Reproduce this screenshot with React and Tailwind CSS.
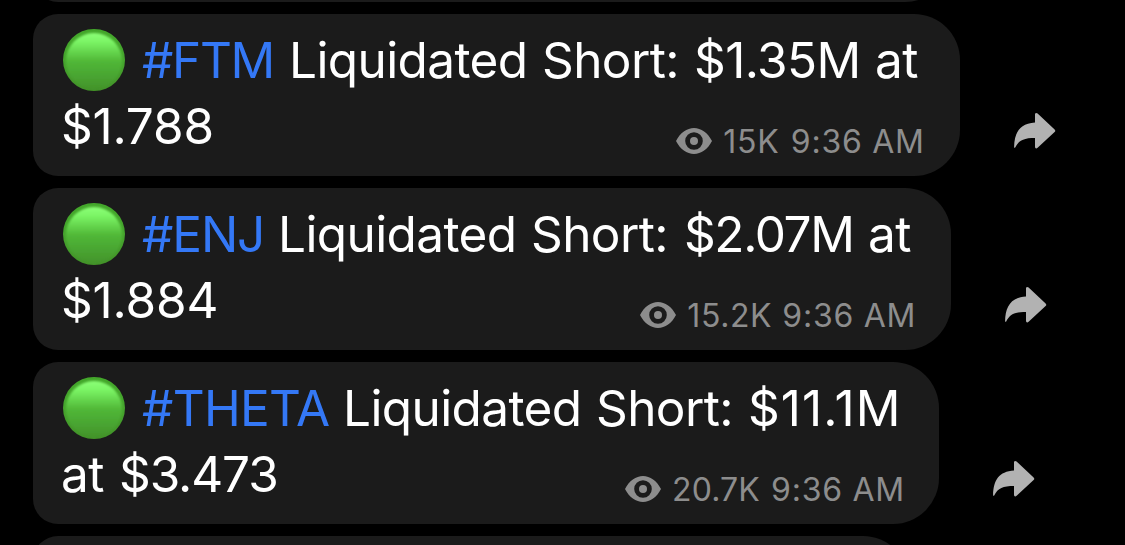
const messages = [
  {
    bubble: 'w-[927px]',
    tag: '#FTM', tagClass: 'w-[147px] tracking-[-1.3px]',
    words: [['Liquidated', 'w-[253px]'], ['Short:', 'w-[152px]'], ['$1.35M', 'w-[181px]'], ['at', 'w-[44px]']],
    second: [['$1.788', 'w-[160px] tracking-[-0.2px]']],
    views: '15K', viewsClass: 'w-[67.5px]', metaClass: 'pr-[35.25px]',
  },
  {
    bubble: 'w-[918px]',
    tag: '#ENJ', tagClass: 'w-[136px] tracking-[-1.1px]',
    words: [['Liquidated', 'w-[253px]'], ['Short:', 'w-[153px]'], ['$2.07M', 'w-[184px] tracking-[-1.4px]'], ['at', 'w-[44px]']],
    second: [['$1.884', 'w-[160px] tracking-[-0.15px]']],
    views: '15.2K', viewsClass: 'w-[95px] tracking-[0.6px]', metaClass: 'pr-[34.75px]',
  },
  {
    bubble: 'w-[906px]',
    tag: '#THETA', tagClass: 'w-[201px] tracking-[-0.7px]',
    words: [['Liquidated', 'w-[253px]'], ['Short:', 'w-[152px]'], ['$11.1M', 'w-[160px] tracking-[1.1px]']],
    second: [['at', 'w-[58px]'], ['$3.473', 'w-[160px] tracking-[-1.1px]']],
    views: '20.7K', viewsClass: 'w-[99px] tracking-[0.1px]', metaClass: 'pr-[34px]',
  },
];

function Eye() {
  return (
    <svg className="mt-[2px] mr-[11px] h-[26px] w-[36px] shrink-0" viewBox="0 0 36 26" fill="#8d8d8d">
      <path fillRule="evenodd" d="M0 13C4 5 11 0 18 0s14 5 18 13c-4 8-11 13-18 13S4 21 0 13ZM18 4.2a8.8 8.8 0 1 0 0 17.6 8.8 8.8 0 0 0 0-17.6Z" />
      <circle cx="18" cy="13" r="4" />
    </svg>
  );
}

function Forward() {
  return (
    <svg className="mb-[26px] ml-[53px] h-[38px] w-[44px]" viewBox="0 0 44 38" fill="#b2b2b2">
      <path d="M22 2.8c0-1.9 1.3-2.4 2.6-1.2l17 15.8c.9.8.9 1.8 0 2.6l-17 15.8c-1.3 1.2-2.6.7-2.6-1.2V26C11 26 6 28 2.2 35.5c-.4.7-1.1.5-1.1-.4C1.4 20.5 7 11.3 22 10.5Z" />
    </svg>
  );
}

function GreenCircle() {
  return (
    <svg className="mr-[17px] h-[62px] w-[62px] shrink-0" viewBox="0 0 62 62">
      <defs>
        <linearGradient id="body" x1="0" y1="0" x2="0" y2="1">
          <stop offset="0" stopColor="#43a72a" />
          <stop offset=".5" stopColor="#45a42d" />
          <stop offset="1" stopColor="#429129" />
        </linearGradient>
        <linearGradient id="gloss" x1="0" y1="0" x2="0" y2="1">
          <stop offset="0" stopColor="#8cff78" />
          <stop offset=".16" stopColor="#7bf465" />
          <stop offset=".5" stopColor="#51b838" />
          <stop offset="1" stopColor="#43942b" />
        </linearGradient>
        <filter id="soft" x="-10%" y="-10%" width="120%" height="120%">
          <feGaussianBlur stdDeviation="0.9" />
        </filter>
      </defs>
      <circle cx="31" cy="31" r="31" fill="url(#body)" />
      <ellipse cx="31" cy="32" rx="28" ry="28" fill="url(#gloss)" filter="url(#soft)" />
    </svg>
  );
}

function Words({ items }) {
  return items.map(([text, width]) => (
    <span key={text} className={`shrink-0 ${width}`}>{text}</span>
  ));
}

function Message({ message }) {
  return (
    <div className="flex h-[162px] items-end">
      <div className={`flex h-full shrink-0 flex-col rounded-l-[25px] rounded-r-[46px] bg-[#1b1b1b] pt-[15px] pl-[30px] ${message.bubble}`}>
        <div className="flex h-[66px] text-[49.5px] leading-[62px] tracking-[-0.6px] whitespace-nowrap text-white">
          <GreenCircle />
          <span className={`shrink-0 text-[#3478f6] ${message.tagClass}`}>{message.tag}</span>
          <Words items={message.words} />
        </div>
        <div className={`flex justify-between ${message.metaClass}`}>
          <div className="-ml-[2px] flex text-[49.5px] leading-[62px] tracking-[-0.6px] whitespace-nowrap text-white">
            <Words items={message.second} />
          </div>
          <div className="mt-[31px] flex text-[32px] leading-[32px] tracking-[0.75px] whitespace-nowrap text-[#8d8d8d]">
            <Eye />
            <span className={message.viewsClass}>{message.views}</span>
            <span>9:36 AM</span>
          </div>
        </div>
      </div>
      <Forward />
    </div>
  );
}

export default function App() {
  return (
    <main className="h-[545px] w-[1125px] overflow-hidden bg-black pl-[33px] font-['Inter',sans-serif]">
      <div className="flex h-[2px] w-[918px] flex-col justify-end overflow-hidden">
        <div className="h-[162px] shrink-0 rounded-l-[25px] rounded-r-[46px] bg-[#1b1b1b]" />
      </div>
      <div className="mt-3 flex flex-col gap-3">
        {messages.map((message) => <Message key={message.tag} message={message} />)}
        <div className="h-[162px] w-[876px] rounded-l-[25px] rounded-r-[46px] bg-[#1b1b1b]" />
      </div>
    </main>
  );
}
